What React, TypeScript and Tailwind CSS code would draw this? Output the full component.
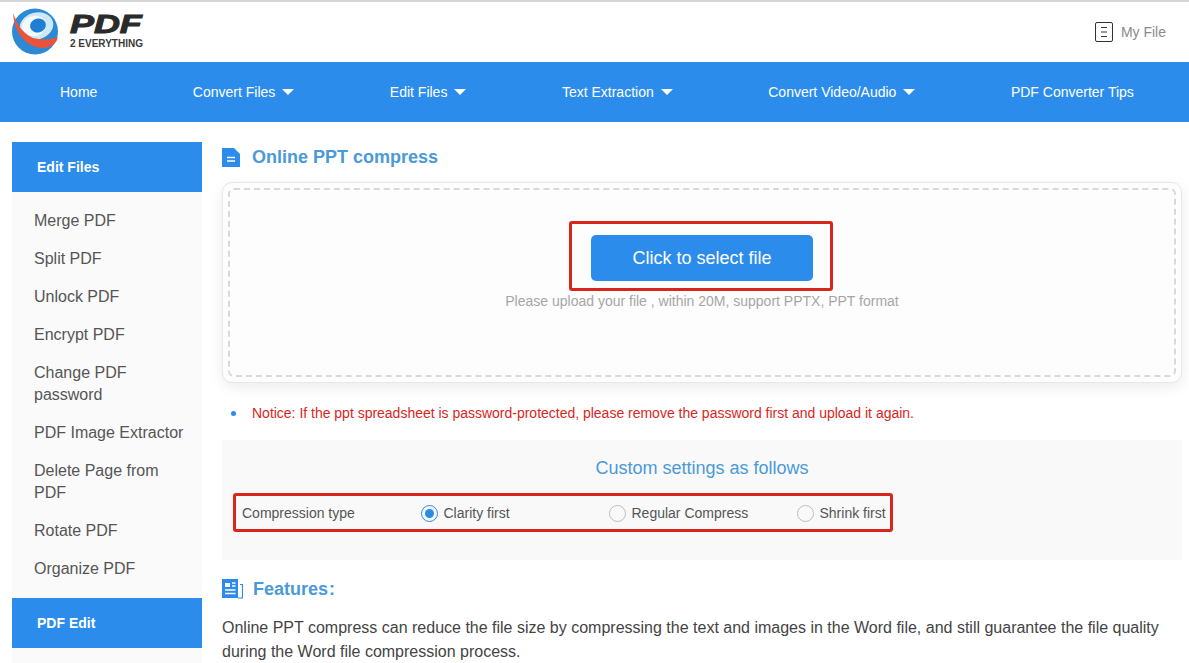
import React from "react";

const navItems = [
  { label: "Home", caret: false },
  { label: "Convert Files", caret: true },
  { label: "Edit Files", caret: true },
  { label: "Text Extraction", caret: true },
  { label: "Convert Video/Audio", caret: true },
  { label: "PDF Converter Tips", caret: false },
];

const sideItems = [
  "Merge PDF",
  "Split PDF",
  "Unlock PDF",
  "Encrypt PDF",
  "Change PDF password",
  "PDF Image Extractor",
  "Delete Page from PDF",
  "Rotate PDF",
  "Organize PDF",
];

const Logo = () => (
  <svg width="50" height="50" viewBox="0 0 50 50" className="shrink-0">
    <circle cx="24" cy="24.5" r="23" fill="#2b8ad6" />
    <ellipse cx="25.5" cy="19" rx="17" ry="13.5" fill="#cfe9f3" transform="rotate(-15 25.5 19)" />
    <ellipse cx="23" cy="19" rx="12" ry="10" fill="#f4fbfd" transform="rotate(-15 23 19)" />
    <ellipse cx="27" cy="18.5" rx="8" ry="7" fill="#1f7fd6" transform="rotate(-15 27 18.5)" />
    <path d="M2 6 C5 14 10 26 22 31 C30 33 40 33 46.500 30 C47 35 40 41 32 41 C20 41 4 32 2 6Z" fill="#e8543c" />
  </svg>
);

const Radio = ({ checked, label, width }: { checked?: boolean; label: string; width: string }) => (
  <div className={`flex items-center gap-[6px] ${width}`}>
    <span className={`flex h-[17px] w-[17px] items-center justify-center rounded-full border ${checked ? "border-[#2b8ce6]" : "border-[#bdbdbd]"}`}>
      {checked && <span className="h-[9px] w-[9px] rounded-full bg-[#2b8ce6]" />}
    </span>
    <span>{label}</span>
  </div>
);

const App: React.FC = () => {
  return (
    <div className="h-[663px] w-[1189px] overflow-hidden bg-white font-['Liberation_Sans',Arial,sans-serif]">
      <header className="flex h-[62px] items-center justify-between border-t-2 border-[#d6d6d6] pl-[11px] pr-[23px]">
        <div className="flex items-center gap-[9px]">
          <Logo />
          <div className="flex flex-col gap-[2px] pb-[2px]">
            <span className="origin-left scale-x-[1.38] text-[26px] leading-[24px] font-bold italic text-[#2b2b2b] [-webkit-text-stroke:1px_#2b2b2b]">PDF</span>
            <span className="text-[10px] leading-[12px] font-bold text-[#3a3a3a]">2 EVERYTHING</span>
          </div>
        </div>
        <div className="flex items-center gap-[8px] text-[14px] text-[#8a8a8a]">
          <svg width="18" height="20" viewBox="0 0 18 20" fill="none" stroke="#333">
            <rect x="0.5" y="0.5" width="17" height="19" rx="1.5" />
            <path d="M6 5.5h6M6 10h6M6 14.5h6" />
          </svg>
          My File
        </div>
      </header>

      <nav className="flex h-[60px] items-center gap-[95.5px] bg-[#2b8ceb] pl-[60px] text-[14px] text-white">
        {navItems.map((item) => (
          <div key={item.label} className="flex items-center gap-[7px]">
            {item.label}
            {item.caret && <span className="h-0 w-0 border-x-[6px] border-t-[6px] border-x-transparent border-t-white" />}
          </div>
        ))}
      </nav>

      <div className="flex gap-[20px] pl-[12px] pt-[20px]">
        <aside className="w-[190px] shrink-0 bg-[#fafafa]">
          <div className="flex h-[50px] items-center bg-[#2b8ceb] pl-[25px] text-[14px] font-bold text-white">Edit Files</div>
          <ul className="py-[10px] pl-[22px] pr-[10px] text-[16px] leading-[22px] text-[#555]">
            {sideItems.map((item) => (
              <li key={item} className="py-[8px]">{item}</li>
            ))}
          </ul>
          <div className="flex h-[50px] items-center bg-[#2b8ceb] pl-[25px] text-[14px] font-bold text-white">PDF Edit</div>
        </aside>

        <main className="w-[960px] shrink-0">
          <div className="flex h-[30px] items-center gap-[12px]">
            <svg width="18" height="19" viewBox="0 0 18 19">
              <path d="M0 0h12l6 6v13H0z" fill="#2b8ceb" />
              <path d="M5 9.5h8M5 13h8" stroke="#fff" strokeWidth="1.6" />
            </svg>
            <h1 className="text-[18px] font-bold text-[#4a9ad9]">Online PPT compress</h1>
          </div>

          <div className="mt-[10px] h-[201px] rounded-[10px] border border-[#e8e8e8] bg-[#fdfdfd] p-[5px] shadow-[0_4px_14px_rgba(0,0,0,0.08)]">
            <div className="flex h-full flex-col items-center rounded-[6px] border-2 border-dashed border-[#d9d9d9] pt-[31px]">
              <div className="mr-[2px] rounded-[3px] border-[3px] border-[#d9261c] pb-[7px] pl-[19px] pr-[17px] pt-[11px]">
                <div className="flex h-[46px] w-[222px] items-center justify-center rounded-[5px] bg-[#2b8ceb] text-[18px] text-white">
                  Click to select file
                </div>
              </div>
              <p className="text-[14px] leading-[20px] text-[#a6a6a6]">Please upload your file , within 20M, support PPTX, PPT format</p>
            </div>
          </div>

          <div className="mt-[20px] flex items-center text-[14px] leading-[20px] tracking-[-0.01px] text-[#d9261c]">
            <span className="ml-[9px] mr-[16px] h-[5px] w-[5px] rounded-full bg-[#2b8ceb]" />
            Notice: If the ppt spreadsheet is password-protected, please remove the password first and upload it again.
          </div>

          <section className="mt-[17px] h-[120px] bg-[#f9f9f9] pt-[17px]">
            <h2 className="text-center text-[18px] leading-[22px] text-[#4a9ad9]">Custom settings as follows</h2>
            <div className="ml-[11px] mt-[14px] flex h-[39px] w-[660px] items-center rounded-[3px] border-[3px] border-[#d9261c] pl-[6px] pt-[1px] text-[14px] text-[#555]">
              <span className="w-[178.5px]">Compression type</span>
              <Radio checked label="Clarity first" width="w-[188px]" />
              <Radio label="Regular Compress" width="w-[188px]" />
              <Radio label="Shrink first" width="w-[90px]" />
            </div>
          </section>

          <div className="mt-[17px] flex h-[24px] items-center gap-[10px]">
            <svg width="21" height="20" viewBox="0 0 21 20">
              <path d="M0 0h16v19H0z" fill="#2b8ceb" />
              <path d="M3 4h5v4H3z" fill="#fff" />
              <path d="M10 4h3.500M10 7h3.500M3 11h10.500M3 14.500h10.500" stroke="#fff" strokeWidth="1.3" />
              <path d="M18 5.500h2.500v13.500H16" fill="none" stroke="#2b8ceb" strokeWidth="1.2" />
            </svg>
            <h2 className="text-[18px] font-bold text-[#4a9ad9]">Features<span className="ml-[1px]">:</span></h2>
          </div>

          <p className="mt-[15px] text-[16px] leading-[24px] text-[#444]">
            Online PPT compress can reduce the file size by compressing the text and images in the Word file, and still guarantee the file quality during the Word file compression process.
          </p>
        </main>
      </div>
    </div>
  );
};

export default App;
